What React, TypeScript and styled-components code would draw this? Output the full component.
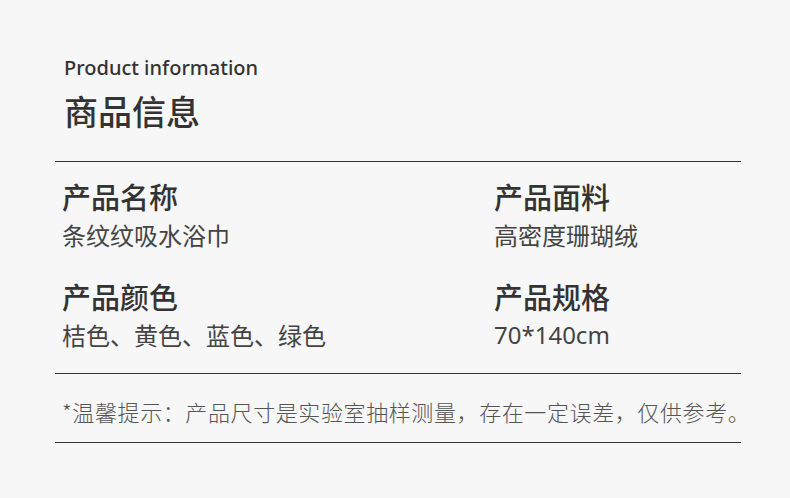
import { createGlobalStyle } from 'styled-components';
import styled from 'styled-components';

const GlobalStyle = createGlobalStyle`
  html, body {
    margin: 0;
    padding: 0;
    background: #f7f7f7;
  }
  body {
    font-family: 'Noto Sans', 'Noto Sans CJK SC', sans-serif;
    color: #333;
  }
`;

const Page = styled.div`
  width: 790px;
  height: 498px;
  box-sizing: border-box;
  padding: 55px 49px 0 55px;
  background: #f7f7f7;
`;

const Header = styled.div`
  padding-left: 9px;
  padding-bottom: 30px;
  border-bottom: 1px solid #333;
`;

const EnTitle = styled.div`
  font-family: 'Noto Sans', sans-serif;
  font-size: 20px;
  line-height: 26px;
  font-weight: 500;
  color: #333;
`;

const CnTitle = styled.div`
  font-family: 'Noto Sans CJK SC', sans-serif;
  font-size: 34px;
  line-height: 40px;
  font-weight: 500;
  color: #333;
  margin-top: 10px;
`;

const SpecGrid = styled.div`
  display: grid;
  grid-template-columns: 432px 1fr;
  row-gap: 28px;
  padding: 16px 0 23px 7px;
  border-bottom: 1px solid #333;
`;

const SpecItem = styled.div`
  display: flex;
  flex-direction: column;
`;

const Label = styled.div`
  font-family: 'Noto Sans CJK SC', sans-serif;
  font-size: 29px;
  line-height: 36px;
  font-weight: 500;
  color: #333;
`;

const Value = styled.div<{ $latin?: boolean }>`
  font-family: ${(p) =>
    p.$latin ? "'Noto Sans', 'Noto Sans CJK SC', sans-serif" : "'Noto Sans CJK SC', sans-serif"};
  font-size: 24px;
  line-height: 30px;
  color: #444;
  margin-top: 6px;
`;

const Note = styled.div`
  font-family: 'Noto Sans CJK SC', sans-serif;
  font-size: 22px;
  letter-spacing: 0.6px;
  line-height: 28px;
  font-weight: 300;
  color: #555;
  padding: 23px 0 17px 7px;
  white-space: nowrap;
  border-bottom: 1px solid #333;
`;

const specs = [
  { label: '产品名称', value: '条纹纹吸水浴巾' },
  { label: '产品面料', value: '高密度珊瑚绒' },
  { label: '产品颜色', value: '桔色、黄色、蓝色、绿色' },
  { label: '产品规格', value: '70*140cm', latin: true },
];

export default function App() {
  return (
    <>
      <GlobalStyle />
      <Page>
        <Header>
          <EnTitle>Product information</EnTitle>
          <CnTitle>商品信息</CnTitle>
        </Header>
        <SpecGrid>
          {specs.map((s) => (
            <SpecItem key={s.label}>
              <Label>{s.label}</Label>
              <Value $latin={s.latin}>{s.value}</Value>
            </SpecItem>
          ))}
        </SpecGrid>
        <Note>*温馨提示：产品尺寸是实验室抽样测量，存在一定误差，仅供参考。</Note>
      </Page>
    </>
  );
}
